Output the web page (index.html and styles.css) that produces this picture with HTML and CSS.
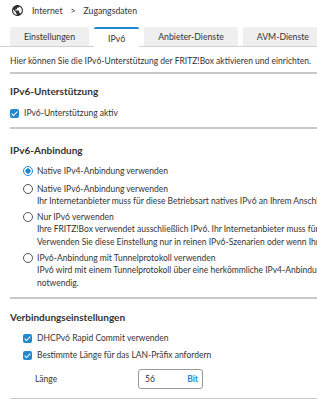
FILE: index.html
```html
<!DOCTYPE html>
<html lang="de">
<head>
    <meta charset="UTF-8">
    <meta name="viewport" content="width=device-width, initial-scale=1.0">
    <title>Zugangsdaten - IPv6</title>
    <link rel="stylesheet" href="styles.css">
</head>
<body>
    <div class="crumbs">
        <svg class="globe" width="11" height="11" viewBox="2 2 20 20">
            <path d="M12 2C6.48 2 2 6.48 2 12s4.48 10 10 10 10-4.480 10-10S17.520 2 12 2zm-1 17.93c-3.95-.49-7-3.85-7-7.93 0-.62.08-1.21.21-1.79L9 15v1c0 1.1.9 2 2 2v1.93zm6.9-2.54c-.26-.81-1-1.39-1.9-1.39h-1v-3c0-.55-.45-1-1-1H8v-2h2c.55 0 1-.45 1-1V7h2c1.1 0 2-.9 2-2v-.41c2.93 1.19 5 4.06 5 7.41 0 2.080-.8 3.970-2.1 5.39z" fill="#333"/>
        </svg>
        <span>Internet</span>
        <span class="sep">&gt;</span>
        <span>Zugangsdaten</span>
    </div>

    <div class="tabs">
        <div class="tab">Einstellungen</div>
        <div class="tab active">IPv6</div>
        <div class="tab">Anbieter-Dienste</div>
        <div class="tab">AVM-Dienste</div>
        <div class="tab">Weitere</div>
    </div>

    <div class="content">
        <p class="intro">Hier können Sie die IPv6-Unterstützung der FRITZ!Box aktivieren und einrichten.</p>

        <div class="section first">
            <h2>IPv6-Unterstützung</h2>
            <label class="check">
                <span class="box"></span>
                IPv6-Unterstützung aktiv
            </label>
        </div>

        <div class="section connect">
            <h2>IPv6-Anbindung</h2>
            <div class="options">
                <div class="option">
                    <span class="radio on"></span>
                    <span>Native IPv4-Anbindung verwenden</span>
                </div>
                <div class="option">
                    <span class="radio"></span>
                    <span>Native IPv6-Anbindung verwenden</span>
                </div>
                <p class="desc">Ihr Internetanbieter muss für diese Betriebsart natives IPv6 an Ihrem Anschluss unterstützen.</p>
                <div class="option">
                    <span class="radio"></span>
                    <span>Nur IPv6 verwenden</span>
                </div>
                <p class="desc">Ihre FRITZ!Box verwendet ausschließlich IPv6. Ihr Internetanbieter muss für diese Betriebsart natives IPv6 unterstützen.<br>Verwenden Sie diese Einstellung nur in reinen IPv6-Szenarien oder wenn Ihr Internetanbieter dies vorgibt.</p>
                <div class="option">
                    <span class="radio"></span>
                    <span>IPv6-Anbindung mit Tunnelprotokoll verwenden</span>
                </div>
                <p class="desc">IPv6 wird mit einem Tunnelprotokoll über eine herkömmliche IPv4-Anbindung verwendet. Dafür ist keine<br>notwendig.</p>
            </div>
        </div>

        <div class="section settings">
            <h2>Verbindungseinstellungen</h2>
            <div class="options">
                <label class="check">
                    <span class="box"></span>
                    DHCPv6 Rapid Commit verwenden
                </label>
                <label class="check">
                    <span class="box"></span>
                    Bestimmte Länge für das LAN-Präfix anfordern
                </label>
                <div class="field">
                    <span class="field-label">Länge</span>
                    <div class="input">
                        <span>56</span>
                        <span class="unit">Bit</span>
                    </div>
                </div>
            </div>
        </div>
    </div>
</body>
</html>
```

FILE: styles.css
```css
body {
    font-family: "Lato", "Open Sans", sans-serif;
    font-size: 8.5px;
    color: #333;
    background: #fff;
    margin: 0;
    overflow: hidden;
    white-space: nowrap;
}

.crumbs {
    display: flex;
    align-items: center;
    height: 20px;
    padding: 0 12px;
    font-size: 8.7px;
}

.globe {
    margin-right: 9px;
}

.sep {
    margin: 0 8px;
}

.tabs {
    display: flex;
    gap: 5px;
    height: 19px;
    margin-top: 7px;
    padding-left: 10px;
    border-bottom: 1px solid #d2d2d2;
}

.tab {
    flex: none;
    display: flex;
    align-items: center;
    justify-content: center;
    padding: 0 14px;
    background: #efefef;
    font-size: 8.7px;
    border-radius: 2px 2px 0 0;
}

.tab.active {
    background: #fff;
    border-top: 2px solid #1f8ad2;
    height: 18px;
    margin-bottom: -1px;
}

.content {
    padding-left: 10px;
}

.intro {
    margin: 0;
    padding: 8px 0 5px;
    line-height: 12px;
    border-bottom: 2px solid #c8c8c8;
}

.section {
    border-bottom: 2px solid #c8c8c8;
}

.section.first {
    padding: 11px 0 8px;
}

.section.connect {
    padding: 15px 0 7px;
}

.section.settings {
    padding: 12px 0 9px;
}

h2 {
    margin: 0 0 10px;
    font-size: 10px;
    line-height: 12px;
    font-weight: bold;
}

.connect h2 {
    margin-bottom: 6px;
}

.settings h2 {
    margin-bottom: 9px;
}

.check {
    display: flex;
    align-items: center;
    gap: 5px;
    height: 12px;
}

.box {
    position: relative;
    width: 9px;
    height: 9px;
    border-radius: 2px;
    background: #1f8ad2;
}

.box::after {
    content: "";
    position: absolute;
    left: 3px;
    top: 1px;
    width: 2px;
    height: 5px;
    border: solid #fff;
    border-width: 0 1.5px 1.5px 0;
    transform: rotate(45deg);
}

.options {
    padding-left: 13px;
}

.option {
    display: flex;
    align-items: center;
    gap: 4px;
    height: 18px;
}

.radio {
    width: 8px;
    height: 8px;
    border: 1px solid #555;
    border-radius: 50%;
}

.radio.on {
    border-color: #1f8ad2;
    background: radial-gradient(circle, #1f8ad2 0 2.4px, #fff 2.9px);
}

.desc {
    margin: -3px 0 0;
    padding-left: 14px;
    line-height: 13px;
}

.options .check + .check {
    margin-top: 5px;
}

.field {
    display: flex;
    align-items: center;
    margin-top: 8px;
    padding-left: 12px;
}

.field-label {
    width: 103px;
}

.input {
    display: flex;
    justify-content: space-between;
    align-items: center;
    box-sizing: border-box;
    width: 65px;
    height: 20px;
    padding: 0 4px 0 6px;
    border: 1px solid #999;
    border-radius: 3px;
}

.unit {
    color: #1f8ad2;
    font-weight: bold;
}
```
